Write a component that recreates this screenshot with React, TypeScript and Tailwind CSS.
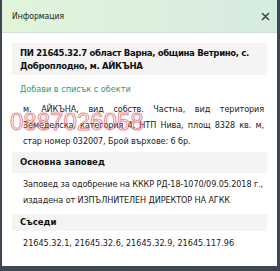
import React from "react";

export default function App() {
  const font = { fontFamily: '"DejaVu Sans Condensed", "DejaVu Sans", sans-serif' };
  return (
    <div className="w-[280px] h-[271px] bg-[#3e4855] overflow-hidden" style={font}>
      <div className="ml-[2px] w-[275px] h-[266px] bg-white flex flex-col">
        <div className="h-[33px] shrink-0 flex items-center justify-between pl-[10px] pr-[7px] bg-gradient-to-r from-[#e1f5da] to-[#d6ebe1] border-b border-[#cfe0d0]">
          <span className="text-[8.5px] text-[#222]">Информация</span>
          <svg width="9" height="9" viewBox="0 0 9 9" className="mt-[1px]">
            <path d="M1.5 1.5 L7.5 7.5 M7.5 1.5 L1.5 7.5" stroke="#444" strokeWidth="1.6" strokeLinecap="round" />
          </svg>
        </div>
        <div className="px-[10px] pt-[10px] flex flex-col">
          <div className="bg-[#f4f4f4] pl-[8px] pr-[4px] py-[3px] text-[9.5px] leading-[13px] tracking-[-0.35px] font-bold text-[#111]">
            ПИ 21645.32.7 област Варна, община Ветрино, с. Доброплодно, м. АЙКЪНА
          </div>
          <div className="pl-[8px] mt-[8px] text-[9px] leading-[12px] text-[#2e9b6c]">Добави в списък с обекти</div>
          <div className="relative mt-[6px] pl-[11px] pr-[3px] text-[9px] leading-[16px] tracking-[-0.1px] text-[#222] text-justify">
            м. АЙКЪНА, вид собств. Частна, вид територия Земеделска, категория 4, НТП Нива, площ 8328 кв. м, стар номер 032007, Брой върхове: 6 бр.
            <span className="absolute left-[-2px] top-[7px] text-[24px] leading-[28px] tracking-normal text-transparent [-webkit-text-stroke:1px_rgba(226,100,100,0.75)] pointer-events-none" style={{ fontFamily: '"Liberation Sans", Arial, sans-serif' }}>
              0887026058
            </span>
          </div>
          <div className="mt-[3px] bg-[#f4f4f4] px-[8px] h-[21px] flex items-center text-[9.5px] font-bold text-[#111]">Основна заповед</div>
          <div className="mt-[3px] pl-[11px] pr-[3px] text-[9px] leading-[16px] tracking-[-0.1px] text-[#222]">
            Заповед за одобрение на КККР РД-18-1070/09.05.2018 г., издадена от ИЗПЪЛНИТЕЛЕН ДИРЕКТОР НА АГКК
          </div>
          <div className="mt-[6px] bg-[#f4f4f4] px-[8px] h-[17px] flex items-center text-[9.5px] font-bold text-[#111]">Съседи</div>
          <div className="mt-[4px] pl-[11px] pr-[3px] text-[9px] leading-[16px] text-[#222]">
            21645.32.1, 21645.32.6, 21645.32.9, 21645.117.96
          </div>
        </div>
      </div>
    </div>
  );
}
